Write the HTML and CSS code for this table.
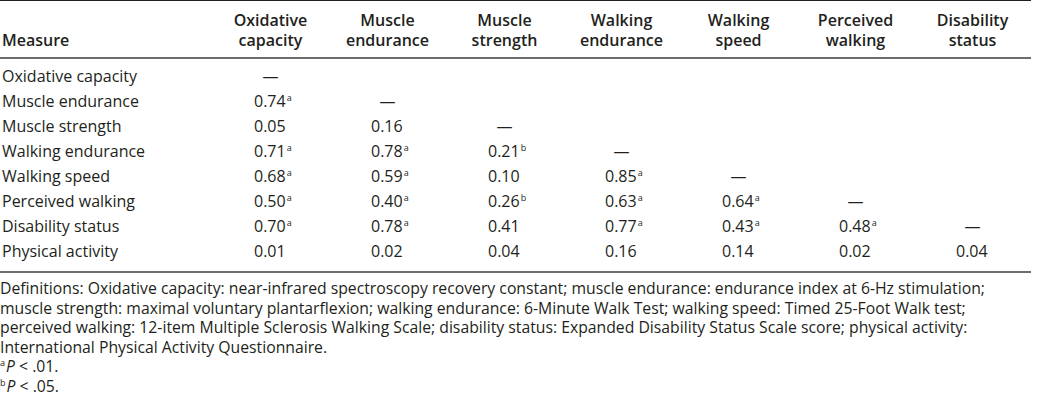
FILE: index.html
```html
<!DOCTYPE html>
<html lang="en">
<head>
<meta charset="utf-8">
<title>Correlations among measures</title>
<link rel="stylesheet" href="styles.css">
</head>
<body>
<div class="wrap">
<table class="corr">
  <colgroup>
    <col class="c-measure">
    <col class="c-val"><col class="c-val"><col class="c-val"><col class="c-val"><col class="c-val"><col class="c-val"><col class="c-val">
  </colgroup>
  <thead>
    <tr>
      <th class="h-measure">Measure</th>
      <th>Oxidative<br>capacity</th>
      <th>Muscle<br>endurance</th>
      <th>Muscle<br>strength</th>
      <th>Walking<br>endurance</th>
      <th>Walking<br>speed</th>
      <th>Perceived<br>walking</th>
      <th>Disability<br>status</th>
    </tr>
  </thead>
  <tbody>
    <tr class="first"><td class="lbl">Oxidative capacity</td><td class="dash">—</td><td></td><td></td><td></td><td></td><td></td><td></td></tr>
    <tr><td class="lbl">Muscle endurance</td><td class="num">0.74<sup>a</sup></td><td class="dash">—</td><td></td><td></td><td></td><td></td><td></td></tr>
    <tr><td class="lbl">Muscle strength</td><td class="num">0.05</td><td class="num">0.16</td><td class="dash">—</td><td></td><td></td><td></td><td></td></tr>
    <tr><td class="lbl">Walking endurance</td><td class="num">0.71<sup>a</sup></td><td class="num">0.78<sup>a</sup></td><td class="num">0.21<sup>b</sup></td><td class="dash">—</td><td></td><td></td><td></td></tr>
    <tr><td class="lbl">Walking speed</td><td class="num">0.68<sup>a</sup></td><td class="num">0.59<sup>a</sup></td><td class="num">0.10</td><td class="num">0.85<sup>a</sup></td><td class="dash">—</td><td></td><td></td></tr>
    <tr><td class="lbl">Perceived walking</td><td class="num">0.50<sup>a</sup></td><td class="num">0.40<sup>a</sup></td><td class="num">0.26<sup>b</sup></td><td class="num">0.63<sup>a</sup></td><td class="num">0.64<sup>a</sup></td><td class="dash">—</td><td></td></tr>
    <tr><td class="lbl">Disability status</td><td class="num">0.70<sup>a</sup></td><td class="num">0.78<sup>a</sup></td><td class="num">0.41</td><td class="num">0.77<sup>a</sup></td><td class="num">0.43<sup>a</sup></td><td class="num">0.48<sup>a</sup></td><td class="dash">—</td></tr>
    <tr class="last"><td class="lbl">Physical activity</td><td class="num">0.01</td><td class="num">0.02</td><td class="num">0.04</td><td class="num">0.16</td><td class="num">0.14</td><td class="num">0.02</td><td class="num">0.04</td></tr>
  </tbody>
</table>
<div class="notes">
  <p>Definitions: Oxidative capacity: near-infrared spectroscopy recovery constant; muscle endurance: endurance index at 6-Hz stimulation;<br>muscle strength: maximal voluntary plantarflexion; walking endurance: 6-Minute Walk Test; walking speed: Timed 25-Foot Walk test;<br>perceived walking: 12-item Multiple Sclerosis Walking Scale; disability status: Expanded Disability Status Scale score; physical activity:<br>International Physical Activity Questionnaire.</p>
  <p><sup>a</sup><i>P</i> &lt; .01.</p>
  <p><sup>b</sup><i>P</i> &lt; .05.</p>
</div>
</div>
</body>
</html>
```

FILE: styles.css
```css
html, body {
  margin: 0;
  padding: 0;
  background: #ffffff;
}

body {
  font-family: "Open Sans", "Noto Sans", sans-serif;
  color: #231f20;
  font-size: 16px;
}

.wrap {
  width: 1031px;
}

.corr {
  width: 1031px;
  border-collapse: collapse;
  table-layout: fixed;
  border-top: 1.5px solid #231f20;
  border-bottom: 2px solid #6d6d6d;
}

.c-measure { width: 212px; }
.c-val { width: 117px; }

.corr th {
  font-weight: 600;
  font-size: 16px;
  text-align: center;
  vertical-align: bottom;
  line-height: 20px;
  padding: 9px 0 7px;
  border-bottom: 2px solid #6d6d6d;
}

.corr th.h-measure {
  text-align: left;
  padding-left: 2px;
}

.corr td {
  height: 25px;
  padding: 0;
  line-height: 25px;
  white-space: nowrap;
}

.corr tr.first td { padding-top: 5px; }
.corr tr.last td { padding-bottom: 7px; }

.corr td.lbl { padding-left: 2px; }
.corr td.num { padding-left: 42px; }
.corr td.dash { text-align: center; }

sup {
  font-size: 9px;
  line-height: 0;
  vertical-align: 6px;
  margin-left: 1px;
}

.notes {
  padding-top: 6px;
  font-size: 15.75px;
  line-height: 19.6px;
}

.notes p { margin: 0; white-space: nowrap; }
.notes sup { margin-left: 0; margin-right: 1px; }
```
